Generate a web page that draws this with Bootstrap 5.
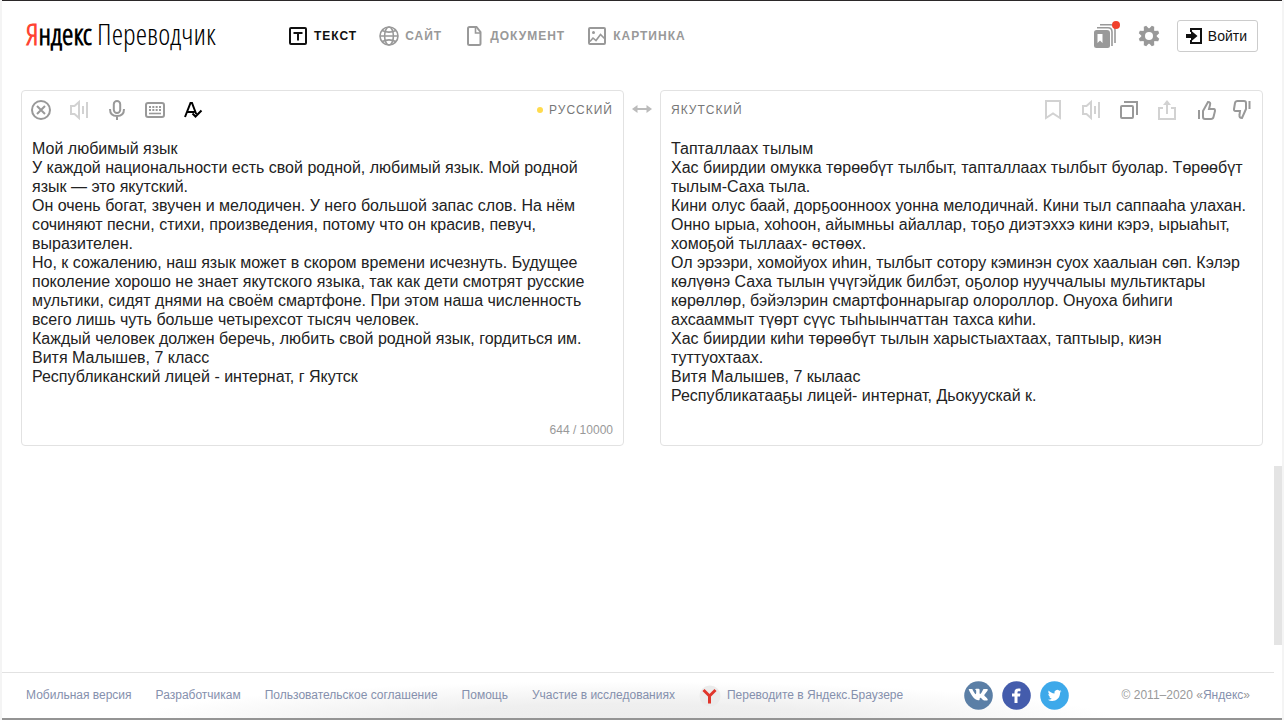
<!DOCTYPE html>
<html lang="ru">
<head>
<meta charset="utf-8">
<meta name="viewport" content="width=device-width, initial-scale=1">
<title>Яндекс Переводчик</title>
<link href="https://cdn.jsdelivr.net/npm/bootstrap@5.3.0/dist/css/bootstrap.min.css" rel="stylesheet">
<style>
  body { font-family: "Liberation Sans", Arial, sans-serif; font-size: 16px; line-height: 19px; color: #222; background: #fff; }
  svg { display: block; fill: none; stroke: currentColor; stroke-width: 2; overflow: visible; }
  svg.solid { fill: currentColor; stroke: none; }
  .thin { stroke-width: 1.6; }
  .thick { stroke-width: 3; }
  .frame { border: solid #f4f4f4; border-width: 0 2px; box-shadow: inset 0 1px #2b2829, inset 0 -2px #949494; padding: 1px 0 2px; }
  .page-column { min-width: 0; }
  .bare { border: 0; background: none; padding: 0; color: #999; }
  .faint { color: #d2d2d2; }
  .site-head { padding: 19px 16px 38px 24px; }
  .logo { font-family: "Open Sans Condensed Light", "Open Sans Condensed", "Liberation Sans Narrow", sans-serif; font-size: 29px; line-height: 28px; height: 32px; font-weight: 300; color: #000; width: 262px; white-space: nowrap; }
  .logo b { font-weight: 700; }
  .logo .ya { color: #f43; }
  .modes { gap: 22px; }
  .modes a { display: flex; align-items: center; gap: 6px; font-size: 12px; font-weight: 700; letter-spacing: 1px; color: #999; text-decoration: none; }
  .modes a.active { color: #111; }
  .head-tools { gap: 18px; }
  .login { height: 32px; padding: 0 10px 0 8px; gap: 6px; border: 1px solid #ccc; border-radius: 3px; background: #fff; font-size: 14px; color: #111; }
  .panels { padding: 0 11px 0 19px; }
  .panel { flex: 1 1 0; min-width: 0; min-height: 356px; border: 1px solid #e2e2e2; border-radius: 4px; }
  .tools { height: 38px; padding: 0 9px; gap: 18px; }
  .lang { font-size: 12px; letter-spacing: 1px; color: #777; padding: 0 1px; }
  .lang-dot { width: 6px; height: 6px; background: #ffdb4d; margin-right: 6px; }
  .words { display: block; width: 100%; border: 0; outline: 0; resize: none; background: none; color: #222; padding: 10px 10px 0; line-height: 19px; white-space: pre-wrap; overflow: hidden; }
  .counter { font-size: 12px; color: #999; padding: 0 10px 5px; }
  .swap { width: 36px; height: 38px; color: #bbb; }
  .rail { width: 8px; }
  .rail-before { flex: 465; }
  .rail-thumb { flex: 179; background: #e4e4e4; }
  .rail-after { flex: 73; }
  .site-foot { height: 46px; border-top: 1px solid #e2e2e2; padding: 0 24px; font-size: 12px; color: #999; }
  .site-foot a { color: #8590ad; text-decoration: none; }
  .foot-shade { background: radial-gradient(ellipse 39% 90% at 49% 110%, #ececec 0, #efefef 45%, rgba(255,255,255,0) 100%); }
  .foot-links { gap: 24px; }
  .browser-link { gap: 6px; }
  .social { gap: 9px; margin-right: 53px; }
</style>
</head>
<body>
<div class="frame d-flex min-vh-100">
  <div class="page-column d-flex flex-column flex-grow-1">
    <header class="site-head d-flex align-items-center">
      <a class="logo text-decoration-none" href="#"><b><span class="ya">Я</span>ндекс</b> Переводчик</a>
      <nav class="modes d-flex me-auto">
        <a class="active" href="#"><svg width="20" height="20" viewBox="0 0 20 20"><rect x="2" y="2" width="16" height="16" rx="1"/><path d="M5.500 7h9M10 7v7.500"/></svg>ТЕКСТ</a>
        <a href="#"><svg class="thin" width="20" height="20" viewBox="0 0 20 20"><circle cx="10" cy="10" r="9"/><ellipse cx="10" cy="10" rx="4.400" ry="9"/><path d="M1 10h18M3.200 4.500q6.800 3.200 13.600 0M3.200 15.500q6.800-3.200 13.600 0"/></svg>САЙТ</a>
        <a href="#"><svg width="20" height="20" viewBox="0 0 20 20"><path d="M5.500 1h7l4 5v11.500q0 1.500-1.500 1.500H5.500Q4 19 4 17.500v-15Q4 1 5.500 1z"/><path class="thin" d="M11.500 1.500V7H16"/></svg>ДОКУМЕНТ</a>
        <a href="#"><svg width="20" height="20" viewBox="0 0 20 20"><rect x="2" y="2" width="16" height="16" rx="1"/><path class="thin" d="M3 15.500l3-3.500 3 2.500 4.500-6 4.500 4.500"/><circle cx="6.500" cy="6.500" r="1.500" fill="currentColor" stroke="none"/></svg>КАРТИНКА</a>
      </nav>
      <div class="head-tools d-flex align-items-center">
        <button class="bare" aria-label="Коллекции"><svg width="27" height="32" viewBox="0 0 27 32"><path d="M2.500 10H13q3 0 3 3v12.500q0 2.500-2.500 2.500h-11Q0 28 0 25.500v-13Q0 10 2.500 10z" fill="currentColor" stroke="none"/><path d="M3.500 14v9l2.500-2.500L8.500 23v-9z" fill="#fff" stroke="none"/><path class="thin" d="M3 7.800h11Q18 7.800 18 12v14M6 4.800h11Q21 4.800 21 10v13"/><circle cx="22" cy="5" r="4" fill="#f0402c" stroke="none"/></svg></button>
        <button class="bare" aria-label="Настройки"><svg width="20" height="20" viewBox="-10 -10 20 20"><g fill="currentColor" stroke="none"><g transform="rotate(22.500)"><path id="tooth" d="M-3-6L-1.300-10.500H1.300L3-6V6L1.300 10.500H-1.300L-3 6z"/><use href="#tooth" transform="rotate(45)"/><use href="#tooth" transform="rotate(90)"/><use href="#tooth" transform="rotate(135)"/></g><circle r="7.500"/><circle r="4" fill="#fff"/></g></svg></button>
        <button class="login d-flex align-items-center"><svg width="16" height="16" viewBox="0 0 16 16"><path d="M5 4V1h10v14H5v-3"/><path d="M0 6h5V2.500L11.500 8 5 13.500V10H0z" fill="currentColor" stroke="none"/></svg>Войти</button>
      </div>
    </header>

    <main class="panels d-flex">
      <section class="panel d-flex flex-column">
        <div class="tools d-flex align-items-center">
          <button class="bare" aria-label="Очистить"><svg width="20" height="20" viewBox="0 0 20 20"><circle cx="10" cy="10" r="9"/><path d="M6 6l8 8M14 6l-8 8"/></svg></button>
          <button class="bare faint" aria-label="Прослушать"><svg width="20" height="20" viewBox="0 0 20 20"><path d="M2 6h3.500L10 2v16l-4.500-4H2zM14 6v8M18 2v16"/></svg></button>
          <button class="bare" aria-label="Голосовой ввод"><svg width="20" height="20" viewBox="0 0 20 20"><rect x="6.800" y="1" width="6.400" height="12" rx="3.200"/><path d="M3 9q0 7 7 7t7-7M10 16v4"/></svg></button>
          <button class="bare" aria-label="Клавиатура"><svg width="20" height="20" viewBox="0 0 20 20"><rect x="1" y="3" width="18" height="14" rx="2"/><path d="M4 7h12M4 10h12" stroke-dasharray="2 1.330"/><path class="thin" d="M4 13.500h12"/></svg></button>
          <button class="bare text-black" aria-label="Проверка правописания"><svg width="20" height="20" viewBox="0 0 20 20"><path d="M2 17L7.500 3H9l4.200 11M4.500 12h7M9.500 13.500l3 3 6-6"/></svg></button>
          <button class="bare lang ms-auto d-flex align-items-center"><span class="lang-dot rounded-circle"></span>РУССКИЙ</button>
        </div>
        <textarea class="words flex-grow-1" aria-label="Исходный текст" spellcheck="false">Мой любимый язык
У каждой национальности есть свой родной, любимый язык. Мой родной язык — это якутский.
Он очень богат, звучен и мелодичен. У него большой запас слов. На нём сочиняют песни, стихи, произведения, потому что он красив, певуч, выразителен.
Но, к сожалению, наш язык может в скором времени исчезнуть. Будущее поколение хорошо не знает якутского языка, так как дети смотрят русские мультики, сидят днями на своём смартфоне. При этом наша численность всего лишь чуть больше четырехсот тысяч человек.
Каждый человек должен беречь, любить свой родной язык, гордиться им.
Витя Малышев, 7 класс
Республиканский лицей - интернат, г Якутск</textarea>
        <div class="counter text-end">644 / 10000</div>
      </section>

      <button class="bare swap d-flex align-items-center justify-content-center" aria-label="Поменять языки"><svg width="20" height="10" viewBox="0 0 20 10"><path d="M3 5h14"/><path d="M5.500 1v8L0 5zM14.500 1v8L20 5z" fill="currentColor" stroke="none"/></svg></button>

      <section class="panel">
        <div class="tools d-flex align-items-center">
          <button class="bare lang me-auto">ЯКУТСКИЙ</button>
          <button class="bare faint" aria-label="В избранное"><svg width="20" height="20" viewBox="0 0 20 20"><path d="M3 1h14v17l-7-4.500L3 18z"/></svg></button>
          <button class="bare faint" aria-label="Прослушать перевод"><svg width="20" height="20" viewBox="0 0 20 20"><path d="M2 6h3.500L10 2v16l-4.500-4H2zM14 6v8M18 2v16"/></svg></button>
          <button class="bare" aria-label="Скопировать"><svg width="20" height="20" viewBox="0 0 20 20"><rect x="2" y="6" width="12" height="12" rx="1"/><path d="M5 2h13v13"/></svg></button>
          <button class="bare faint" aria-label="Поделиться"><svg width="20" height="20" viewBox="0 0 20 20"><path d="M6 8H2v11h16V8h-4M10 14V3"/><path d="M10 0l4 5H6z" fill="currentColor" stroke="none"/></svg></button>
          <button class="bare" aria-label="Хороший перевод"><svg width="20" height="20" viewBox="0 0 20 20"><path d="M4 10v9M8 11l5-9q3 0 2 3l-1 4h5q1 0 1 2l-1.500 6q-.5 2-2.500 2H10q-2 0-2-2z"/></svg></button>
          <button class="bare" aria-label="Плохой перевод"><svg width="20" height="20" viewBox="0 0 20 20"><path d="M16.500 1v8M13 9l-4 9q-3 0-2.500-3L7 11H2.500q-1.800 0-1.500-2l1-6q.5-2 2.500-2H11q2 0 2 2z"/></svg></button>
        </div>
        <div class="words">Тапталлаах тылым
Хас биирдии омукка төрөөбүт тылбыт, тапталлаах тылбыт буолар. Төрөөбүт тылым-Саха тыла.
Кини олус баай, дорҕоонноох уонна мелодичнай. Кини тыл саппааһа улахан. Онно ырыа, хоһоон, айымньы айаллар, тоҕо диэтэххэ кини кэрэ, ырыаһыт, хомоҕой тыллаах- өстөөх.
Ол эрээри, хомойуох иһин, тылбыт сотору кэминэн суох хаалыан сөп. Кэлэр көлүөнэ Саха тылын үчүгэйдик билбэт, оҕолор нууччалыы мультиктары көрөллөр, бэйэлэрин смартфоннарыгар олороллор. Онуоха биһиги ахсааммыт түөрт сүүс тыһыынчаттан тахса киһи.
Хас биирдии киһи төрөөбүт тылын харыстыахтаах, таптыыр, киэн туттуохтаах.
Витя Малышев, 7 кылаас
Республикатааҕы лицей- интернат, Дьокуускай к.</div>
      </section>
    </main>

    <footer class="foot-shade mt-auto">
      <div class="site-foot d-flex align-items-center">
        <nav class="foot-links d-flex align-items-center me-auto">
          <a href="#">Мобильная версия</a>
          <a href="#">Разработчикам</a>
          <a href="#">Пользовательское соглашение</a>
          <a href="#">Помощь</a>
          <a href="#">Участие в исследованиях</a>
          <a class="browser-link d-flex align-items-center" href="#"><svg class="solid" width="22" height="22" viewBox="0 0 22 22"><circle cx="11" cy="11" r="10.500" fill="#ebebeb"/><path class="thick" d="M4.500 5l6 6 6-6M10.500 11v7.500" fill="none" stroke="#e0352b"/></svg>Переводите в Яндекс.Браузере</a>
        </nav>
        <div class="social d-flex">
          <a href="#" aria-label="ВКонтакте"><svg class="solid" width="29" height="29" viewBox="0 0 29 29"><circle cx="14.500" cy="14.500" r="14.300" fill="#5b7fa6"/><path fill="#fff" d="M13.700 19.300h1.200s.4 0 .5-.2c.2-.2.2-.5.2-.5s0-1.600.7-1.800c.7-.2 1.700 1.500 2.700 2.200.7.500 1.300.4 1.300.4h2.600s1.400-.1.700-1.200c0-.1-.4-.9-2.100-2.400-1.800-1.600-1.500-1.400.6-4.200 1.300-1.700 1.800-2.700 1.600-3.200-.1-.4-1-.3-1-.3h-2.900s-.2 0-.4.1c-.2.100-.3.400-.3.400s-.5 1.200-1.100 2.200c-1.300 2.200-1.800 2.300-2 2.200-.5-.3-.4-1.300-.4-1.900 0-2.100.3-3-.6-3.200-.3-.1-.5-.1-1.300-.1-1 0-1.800 0-2.300.2-.3.200-.6.500-.4.5.2 0 .6.100.9.500.3.400.3 1.300.3 1.300s.2 2.500-.4 2.800c-.4.200-1-.2-2.100-2.300-.6-1-1-2.100-1-2.100s-.1-.2-.3-.4c-.2-.1-.5-.2-.5-.2H5.400s-.4 0-.6.2c-.1.200 0 .5 0 .5s2.200 5.100 4.600 7.600c2.200 2.300 4.300 2.700 4.300 2.700z"/></svg></a>
          <a href="#" aria-label="Facebook"><svg class="solid" width="29" height="29" viewBox="0 0 29 29"><circle cx="14.500" cy="14.500" r="14.300" fill="#445cac"/><path fill="#fff" d="M12.500 22v-6.500H10v-3h2.500v-1.200c0-2.500 1.500-3.700 3.800-3.700 1 0 1.900.1 2.200.1v2.500h-1.500c-1.200 0-1.500.6-1.500 1.200v1.100h2.900l-.4 3h-2.500V22z"/></svg></a>
          <a href="#" aria-label="Twitter"><svg class="solid" width="29" height="29" viewBox="0 0 29 29"><circle cx="14.500" cy="14.500" r="14.300" fill="#3da9ea"/><path fill="#fff" d="M21.500 10.200c-.5.200-1 .4-1.600.4.600-.3 1-.9 1.200-1.500-.5.300-1.100.6-1.800.7a2.800 2.800 0 0 0-4.800 2.600c-2.300-.1-4.400-1.200-5.800-2.900-.7 1.300-.4 2.900.9 3.800-.5 0-.9-.1-1.300-.4 0 1.400 1 2.500 2.200 2.800-.4.100-.8.100-1.200 0 .3 1.100 1.400 1.900 2.600 1.900A5.700 5.700 0 0 1 7.800 18.800c4.900 3 12.300.6 12.300-7.200.5-.4 1-.9 1.400-1.400z"/></svg></a>
        </div>
        <span>© 2011–2020 «<a href="#">Яндекс</a>»</span>
      </div>
    </footer>
  </div>
  <div class="rail d-flex flex-column flex-shrink-0" aria-hidden="true">
    <div class="rail-before"></div><div class="rail-thumb"></div><div class="rail-after"></div>
  </div>
</div>
<script src="https://cdn.jsdelivr.net/npm/bootstrap@5.3.0/dist/js/bootstrap.bundle.min.js"></script>
</body>
</html>
